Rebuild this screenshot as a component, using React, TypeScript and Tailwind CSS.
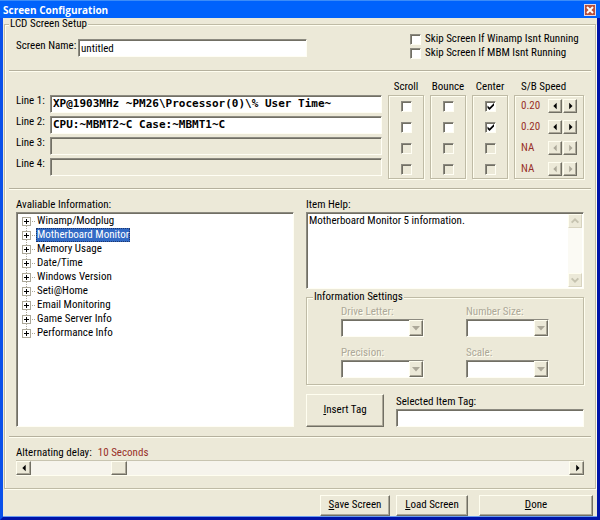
import React from "react";
import clsx from "clsx";

const raised = "bg-[#ece9d8] border border-t-[#fffef0] border-l-[#fffef0] border-r-[#716f64] border-b-[#716f64] shadow-[inset_-1px_-1px_0_#aca899]";
const sunken = "border border-t-[#8c8a80] border-l-[#8c8a80] border-r-[#fffef4] border-b-[#fffef4] shadow-[inset_1px_1px_0_#716f64]";
const etched = "border border-[#bfbba6] shadow-[inset_1px_1px_0_#fffef0,1px_1px_0_#fffef0]";

const lines = [
    { text: "XP@1903MHz ~PM26\\Processor(0)\\% User Time~", enabled: true, center: true, speed: "0.20" },
    { text: "CPU:~MBMT2~C Case:~MBMT1~C", enabled: true, center: true, speed: "0.20" },
    { text: "", enabled: false, center: false, speed: "NA" },
    { text: "", enabled: false, center: false, speed: "NA" },
];

const tree = [
    "Winamp/Modplug",
    "Motherboard Monitor",
    "Memory Usage",
    "Date/Time",
    "Windows Version",
    "Seti@Home",
    "Email Monitoring",
    "Game Server Info",
    "Performance Info",
];

const Separator = () => <hr className="h-[2px] border-0 border-t border-t-[#b5b19e] bg-[#fffef0]" />;

interface ICheck {
    label?: string;
    title?: string;
    checked?: boolean;
    disabled?: boolean;
}
const Check = (props: ICheck) => (
    <label className="flex items-center gap-1 h-[14px] whitespace-nowrap">
        <span className="grid">
            <input
                type="checkbox"
                aria-label={props.title}
                defaultChecked={props.checked}
                disabled={props.disabled}
                className={clsx("peer appearance-none col-start-1 row-start-1 w-[11px] h-[11px]", sunken, props.disabled ? "bg-[#ece9d8]" : "bg-white")}
            />
            <svg viewBox="0 0 11 11" className="col-start-1 row-start-1 w-[11px] h-[11px] pointer-events-none hidden peer-checked:block">
                <path d="M2.5 4.5v2.5l2 2 4.5-4.5v-2.5l-4.5 4.5z" fill="#000" />
            </svg>
        </span>
        {props.label}
    </label>
)

interface IArrow {
    dir: "left" | "right" | "up" | "down";
    disabled?: boolean;
    label: string;
    className?: string;
}
const points = {
    left: "8,2 8,10 4,6",
    right: "5,2 5,10 9,6",
    up: "",
    down: "",
};
const ArrowButton = (props: IArrow) => (
    <button aria-label={props.label} disabled={props.disabled} className={clsx("grid place-items-center shrink-0", raised, props.className)}>
        <svg viewBox="0 0 12 12" className="w-3 h-[10px]">
            {props.dir === "up" && <path d="M2 8l4-4 4 4" fill="none" stroke="#c6c3b0" strokeWidth="2.4" />}
            {props.dir === "down" && <path d="M2 4l4 4 4-4" fill="none" stroke="#c6c3b0" strokeWidth="2.4" />}
            <polygon points={points[props.dir]} fill={props.disabled ? "#aca899" : "#000"} />
        </svg>
    </button>
)

const CheckColumn = (props: { name: string; checks: boolean[] }) => (
    <div className="w-9 shrink-0">
        <div className="h-[15px] leading-[14px] whitespace-nowrap flex justify-center">{props.name}</div>
        <div className={clsx("grid gap-[7px] justify-center pt-[3px] pb-[2px]", etched)}>
            {props.checks.map((checked, i) => (
                <Check key={i} title={`${props.name} line ${i + 1}`} checked={checked} disabled={!lines[i].enabled} />
            ))}
        </div>
    </div>
)

const Combo = (props: { label: string }) => (
    <label className="block text-[#aca899]">
        <span className="block leading-[14px] [text-shadow:1px_1px_0_#fffef0]">{props.label}</span>
        <span className="grid">
            <select disabled className={clsx("appearance-none col-start-1 row-start-1 w-full h-[18px] bg-white opacity-100", sunken)}></select>
            <span className={clsx("col-start-1 row-start-1 justify-self-end self-center mr-[1px] w-[14px] h-4 grid place-items-center pointer-events-none", raised)}>
                <svg viewBox="0 0 8 5" className="w-2 h-[5px]">
                    <polygon points="0,0 8,0 4,4.5" fill="#aca899" />
                </svg>
            </span>
        </span>
    </label>
)

const TreeItem = (props: { name: string; first: boolean; last: boolean; selected: boolean }) => (
    <li className="flex h-[14px]">
        <svg viewBox="0 0 14 14" className="w-[14px] h-[14px] shrink-0">
            {!props.first && <path d="M4.5 0v4" stroke="#aca899" strokeDasharray="1 1" />}
            {!props.last && <path d="M4.5 12v2" stroke="#aca899" strokeDasharray="1 1" />}
            <path d="M10 7.5h4" stroke="#aca899" strokeDasharray="1 1" />
            <rect x="0.5" y="3.5" width="8" height="8" fill="#fff" stroke="#aca899" />
            <path d="M2 7.5h5M4.5 5v5" stroke="#000" />
        </svg>
        <button className={clsx("px-[1px] leading-[14px]", props.selected && "bg-[#316ac5] text-white outline-1 outline-dotted -outline-offset-1 outline-[#20366a]")}>
            {props.name}
        </button>
    </li>
)

const App = () => (
    <div className="min-h-screen flex flex-col bg-[#ece9d8] text-black text-[11px] font-['Roboto_Condensed','Liberation_Sans',sans-serif] border-l-[3px] border-l-[#0a50ea] border-r-[3px] border-r-[#0014a8] border-b-[3px] border-b-[#0014a8] shadow-[inset_0_-1px_0_#6a9cf0]">
        <header className="-mx-[3px] h-[18px] flex items-center justify-between bg-[#0062fc] border-t border-t-[#3c8cf8] pl-[3px] pr-1">
            <h1 className="text-white text-[10px] leading-4 font-bold font-['Open_Sans',sans-serif]">Screen Configuration</h1>
            <button aria-label="Close" className="w-3 h-3 grid place-items-center bg-[#b8503c] border border-[#e8d8e0]">
                <svg viewBox="0 0 8 8" className="w-2 h-2">
                    <path d="M1 1l6 6M7 1l-6 6" stroke="#fff" strokeWidth="2" />
                </svg>
            </button>
        </header>

        <fieldset className={clsx("min-w-0 mx-[1px] px-1", etched)}>
            <legend className="leading-3 px-[1px] bg-[#ece9d8]">LCD Screen Setup</legend>

            <div className="flex justify-between items-start px-[7px] pt-[2px] pb-[10px]">
                <label className="flex grow gap-1 pt-[7px]">
                    <span className="w-[58px] leading-[14px] whitespace-nowrap">Screen Name:</span>
                    <input defaultValue="untitled" className={clsx("grow max-w-[229px] h-[18px] px-[2px] bg-white", sunken)} />
                </label>
                <div className="w-[174px]">
                    <Check label="Skip Screen If Winamp Isnt Running" />
                    <Check label="Skip Screen If MBM Isnt Running" />
                </div>
            </div>

            <Separator />

            <div className="flex gap-[6px] px-[7px] pt-2 pb-[9px]">
                <div className="grow grid content-start gap-[3px] pt-[15px]">
                    {lines.map((line, i) => (
                        <label key={i} className="flex h-[18px]">
                            <span className="w-[34px] leading-3 whitespace-nowrap">Line {i + 1}:</span>
                            <input
                                defaultValue={line.text}
                                disabled={!line.enabled}
                                className={clsx("grow min-w-0 px-[2px] text-[11px] font-bold font-['DejaVu_Sans_Mono','Liberation_Mono',monospace]", sunken, line.enabled ? "bg-white" : "bg-[#ece9d8]")}
                            />
                        </label>
                    ))}
                </div>
                <CheckColumn name="Scroll" checks={lines.map(() => false)} />
                <CheckColumn name="Bounce" checks={lines.map(() => false)} />
                <CheckColumn name="Center" checks={lines.map(line => line.center)} />
                <div className="w-[70px] shrink-0">
                    <div className="h-[15px] leading-[14px] pl-[7px]">S/B Speed</div>
                    <div className={clsx("grid gap-[7px] px-[6px] pt-[3px] pb-[2px]", etched)}>
                        {lines.map((line, i) => (
                            <div key={i} className="flex items-center gap-[1px] h-[14px]">
                                <span className="grow text-[#983028]">{line.speed}</span>
                                <ArrowButton dir="left" label="Slower" disabled={!line.enabled} className="w-[14px] h-[14px]" />
                                <ArrowButton dir="right" label="Faster" disabled={!line.enabled} className="w-[14px] h-[14px]" />
                            </div>
                        ))}
                    </div>
                </div>
            </div>

            <Separator />

            <div className="grid grid-cols-2 gap-3 px-[7px] pt-2 pb-[9px]">
                <div className="flex flex-col">
                    <h2 className="leading-[14px]">Avaliable Information:</h2>
                    <ul className={clsx("grow bg-white pl-[5px] pt-[1px]", sunken)}>
                        {tree.map((name, i) => (
                            <TreeItem key={name} name={name} first={i === 0} last={i === tree.length - 1} selected={i === 1} />
                        ))}
                    </ul>
                </div>

                <div>
                    <label htmlFor="help" className="block leading-[14px]">Item Help:</label>
                    <div className={clsx("flex h-[77px] bg-white p-[1px]", sunken)}>
                        <textarea id="help" readOnly className="grow resize-none outline-none px-[1px] leading-[14px]" defaultValue="Motherboard Monitor 5 information." />
                        <div className="w-[14px] flex flex-col justify-between bg-[#fbfaf4]">
                            <ArrowButton dir="up" label="Scroll up" disabled className="w-[14px] h-[14px] border-r-[#d8d4c0] border-b-[#d8d4c0] shadow-none" />
                            <ArrowButton dir="down" label="Scroll down" disabled className="w-[14px] h-[14px] border-r-[#d8d4c0] border-b-[#d8d4c0] shadow-none" />
                        </div>
                    </div>

                    <fieldset className={clsx("min-w-0 mt-[2px] grid grid-cols-2 gap-x-[42px] gap-y-[9px] px-[34px] pt-[2px] pb-[6px]", etched)}>
                        <legend className="-ml-[28px] leading-3 px-[1px] bg-[#ece9d8]">Information Settings</legend>
                        <Combo label="Drive Letter:" />
                        <Combo label="Number Size:" />
                        <Combo label="Precision:" />
                        <Combo label="Scale:" />
                    </fieldset>

                    <div className="flex items-end gap-3 mt-[9px]">
                        <button className={clsx("w-[78px] h-[33px]", raised)}><u>I</u>nsert Tag</button>
                        <label className="grow">
                            <span className="block leading-[14px]">Selected Item Tag:</span>
                            <input className={clsx("block w-full h-[18px] px-[2px] bg-white", sunken)} />
                        </label>
                    </div>
                </div>
            </div>

            <Separator />

            <div className="px-[7px] pt-2 pb-3">
                <label htmlFor="delay" className="flex gap-[6px] leading-[14px]">
                    Alternating delay: <span className="text-[#983028]">10 Seconds</span>
                </label>
                <div className="flex h-4 border-t border-t-[#c8c4b0] border-b border-b-[#fffef0]">
                    <ArrowButton dir="left" label="Less delay" className="w-[15px]" />
                    <input
                        id="delay"
                        type="range"
                        min="1"
                        max="60"
                        defaultValue="10"
                        className="appearance-none grow min-w-0 bg-[#f6f4ec] [&::-webkit-slider-thumb]:appearance-none [&::-webkit-slider-thumb]:w-4 [&::-webkit-slider-thumb]:h-[14px] [&::-webkit-slider-thumb]:bg-[#ece9d8] [&::-webkit-slider-thumb]:border [&::-webkit-slider-thumb]:border-t-[#fffef0] [&::-webkit-slider-thumb]:border-l-[#fffef0] [&::-webkit-slider-thumb]:border-r-[#716f64] [&::-webkit-slider-thumb]:border-b-[#716f64] [&::-webkit-slider-thumb]:shadow-[inset_-1px_-1px_0_#aca899]"
                    />
                    <ArrowButton dir="right" label="More delay" className="w-[15px]" />
                </div>
            </div>
        </fieldset>

        <footer className="flex justify-end pt-[6px] pr-1 pb-[1px]">
            <button className={clsx("w-[70px] h-[21px] mr-[6px]", raised)}><u>S</u>ave Screen</button>
            <button className={clsx("w-[72px] h-[21px] mr-[11px]", raised)}><u>L</u>oad Screen</button>
            <button className={clsx("w-[114px] h-[21px]", raised)}><u>D</u>one</button>
        </footer>
    </div>
)

export default App;
